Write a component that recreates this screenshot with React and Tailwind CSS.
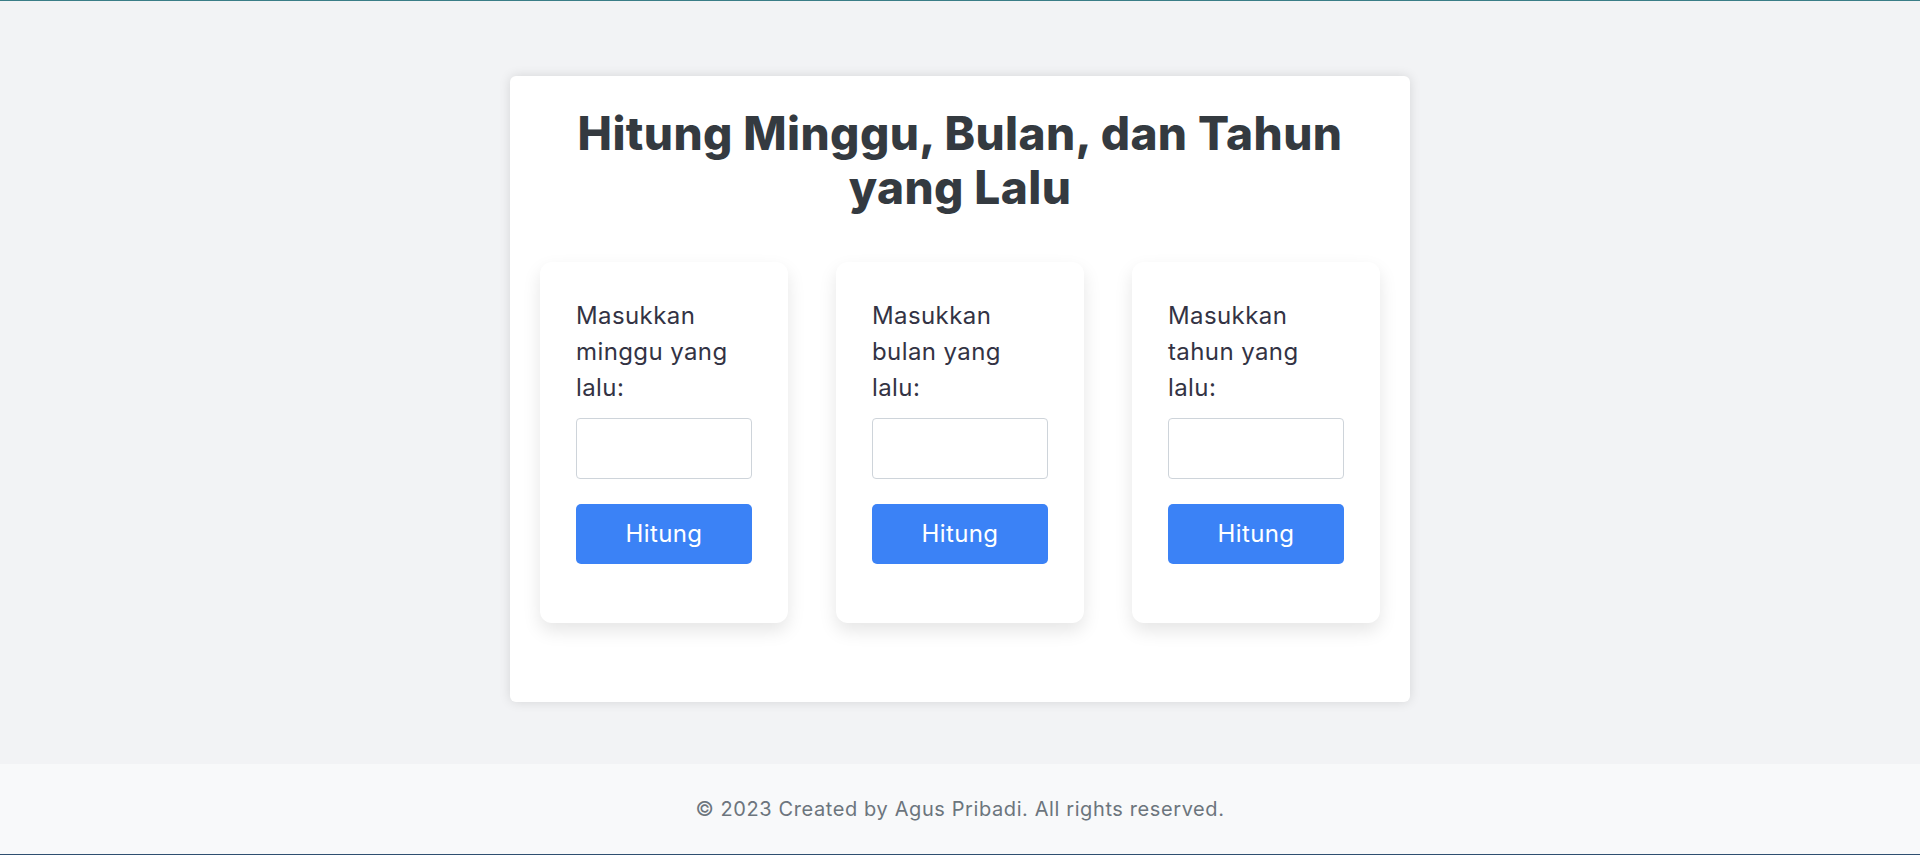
const fields = [
  { id: "minggu", label: "Masukkan minggu yang lalu:" },
  { id: "bulan", label: "Masukkan bulan yang lalu:" },
  { id: "tahun", label: "Masukkan tahun yang lalu:" },
];

const App = () => {
  return (
    <div className="min-h-screen flex flex-col bg-[#f2f3f5] border-t border-[#3a7d87] font-['Inter',sans-serif]">
      {/* Main */}
      <main className="flex-1 pt-[75px]">
        <div className="w-[900px] mx-auto bg-white rounded-md shadow-[0_0_12px_rgba(0,0,0,0.12)] px-[30px] pt-[30px] pb-[79px]">
          <h1 className="mx-auto max-w-[780px] text-center text-[46px] leading-[54px] font-extrabold text-[#343a40] tracking-[0.4px]">
            Hitung Minggu, Bulan, dan Tahun yang Lalu
          </h1>

          {/* Input cards */}
          <div className="grid grid-cols-3 gap-12 mt-[48px]">
            {fields.map((f) => (
              <div
                key={f.id}
                className="bg-white rounded-xl shadow-[0_8px_18px_rgba(0,0,0,0.1)] px-9 pt-9 pb-[59px]"
              >
                <label htmlFor={f.id} className="block text-[24px] leading-9 text-[#333344] tracking-[0.4px] mb-3">
                  {f.label}
                </label>
                <input
                  id={f.id}
                  type="number"
                  className="block w-full h-[61px] border border-[#ced4da] rounded-[4px] bg-white px-3 text-[20px] outline-none"
                />
                <button className="mt-[25px] w-full h-[60px] bg-[#3b82f6] text-white text-[24px] tracking-[0.4px] rounded-[5px]">
                  Hitung
                </button>
              </div>
            ))}
          </div>
        </div>
      </main>

      {/* Footer */}
      <footer className="h-[91px] bg-[#f8f9fa] border-b border-[#2f4f70] flex items-center justify-center">
        <p className="text-[20px] tracking-[0.6px] text-[#6c757d]">© 2023 Created by Agus Pribadi. All rights reserved.</p>
      </footer>
    </div>
  );
};

export default App;
